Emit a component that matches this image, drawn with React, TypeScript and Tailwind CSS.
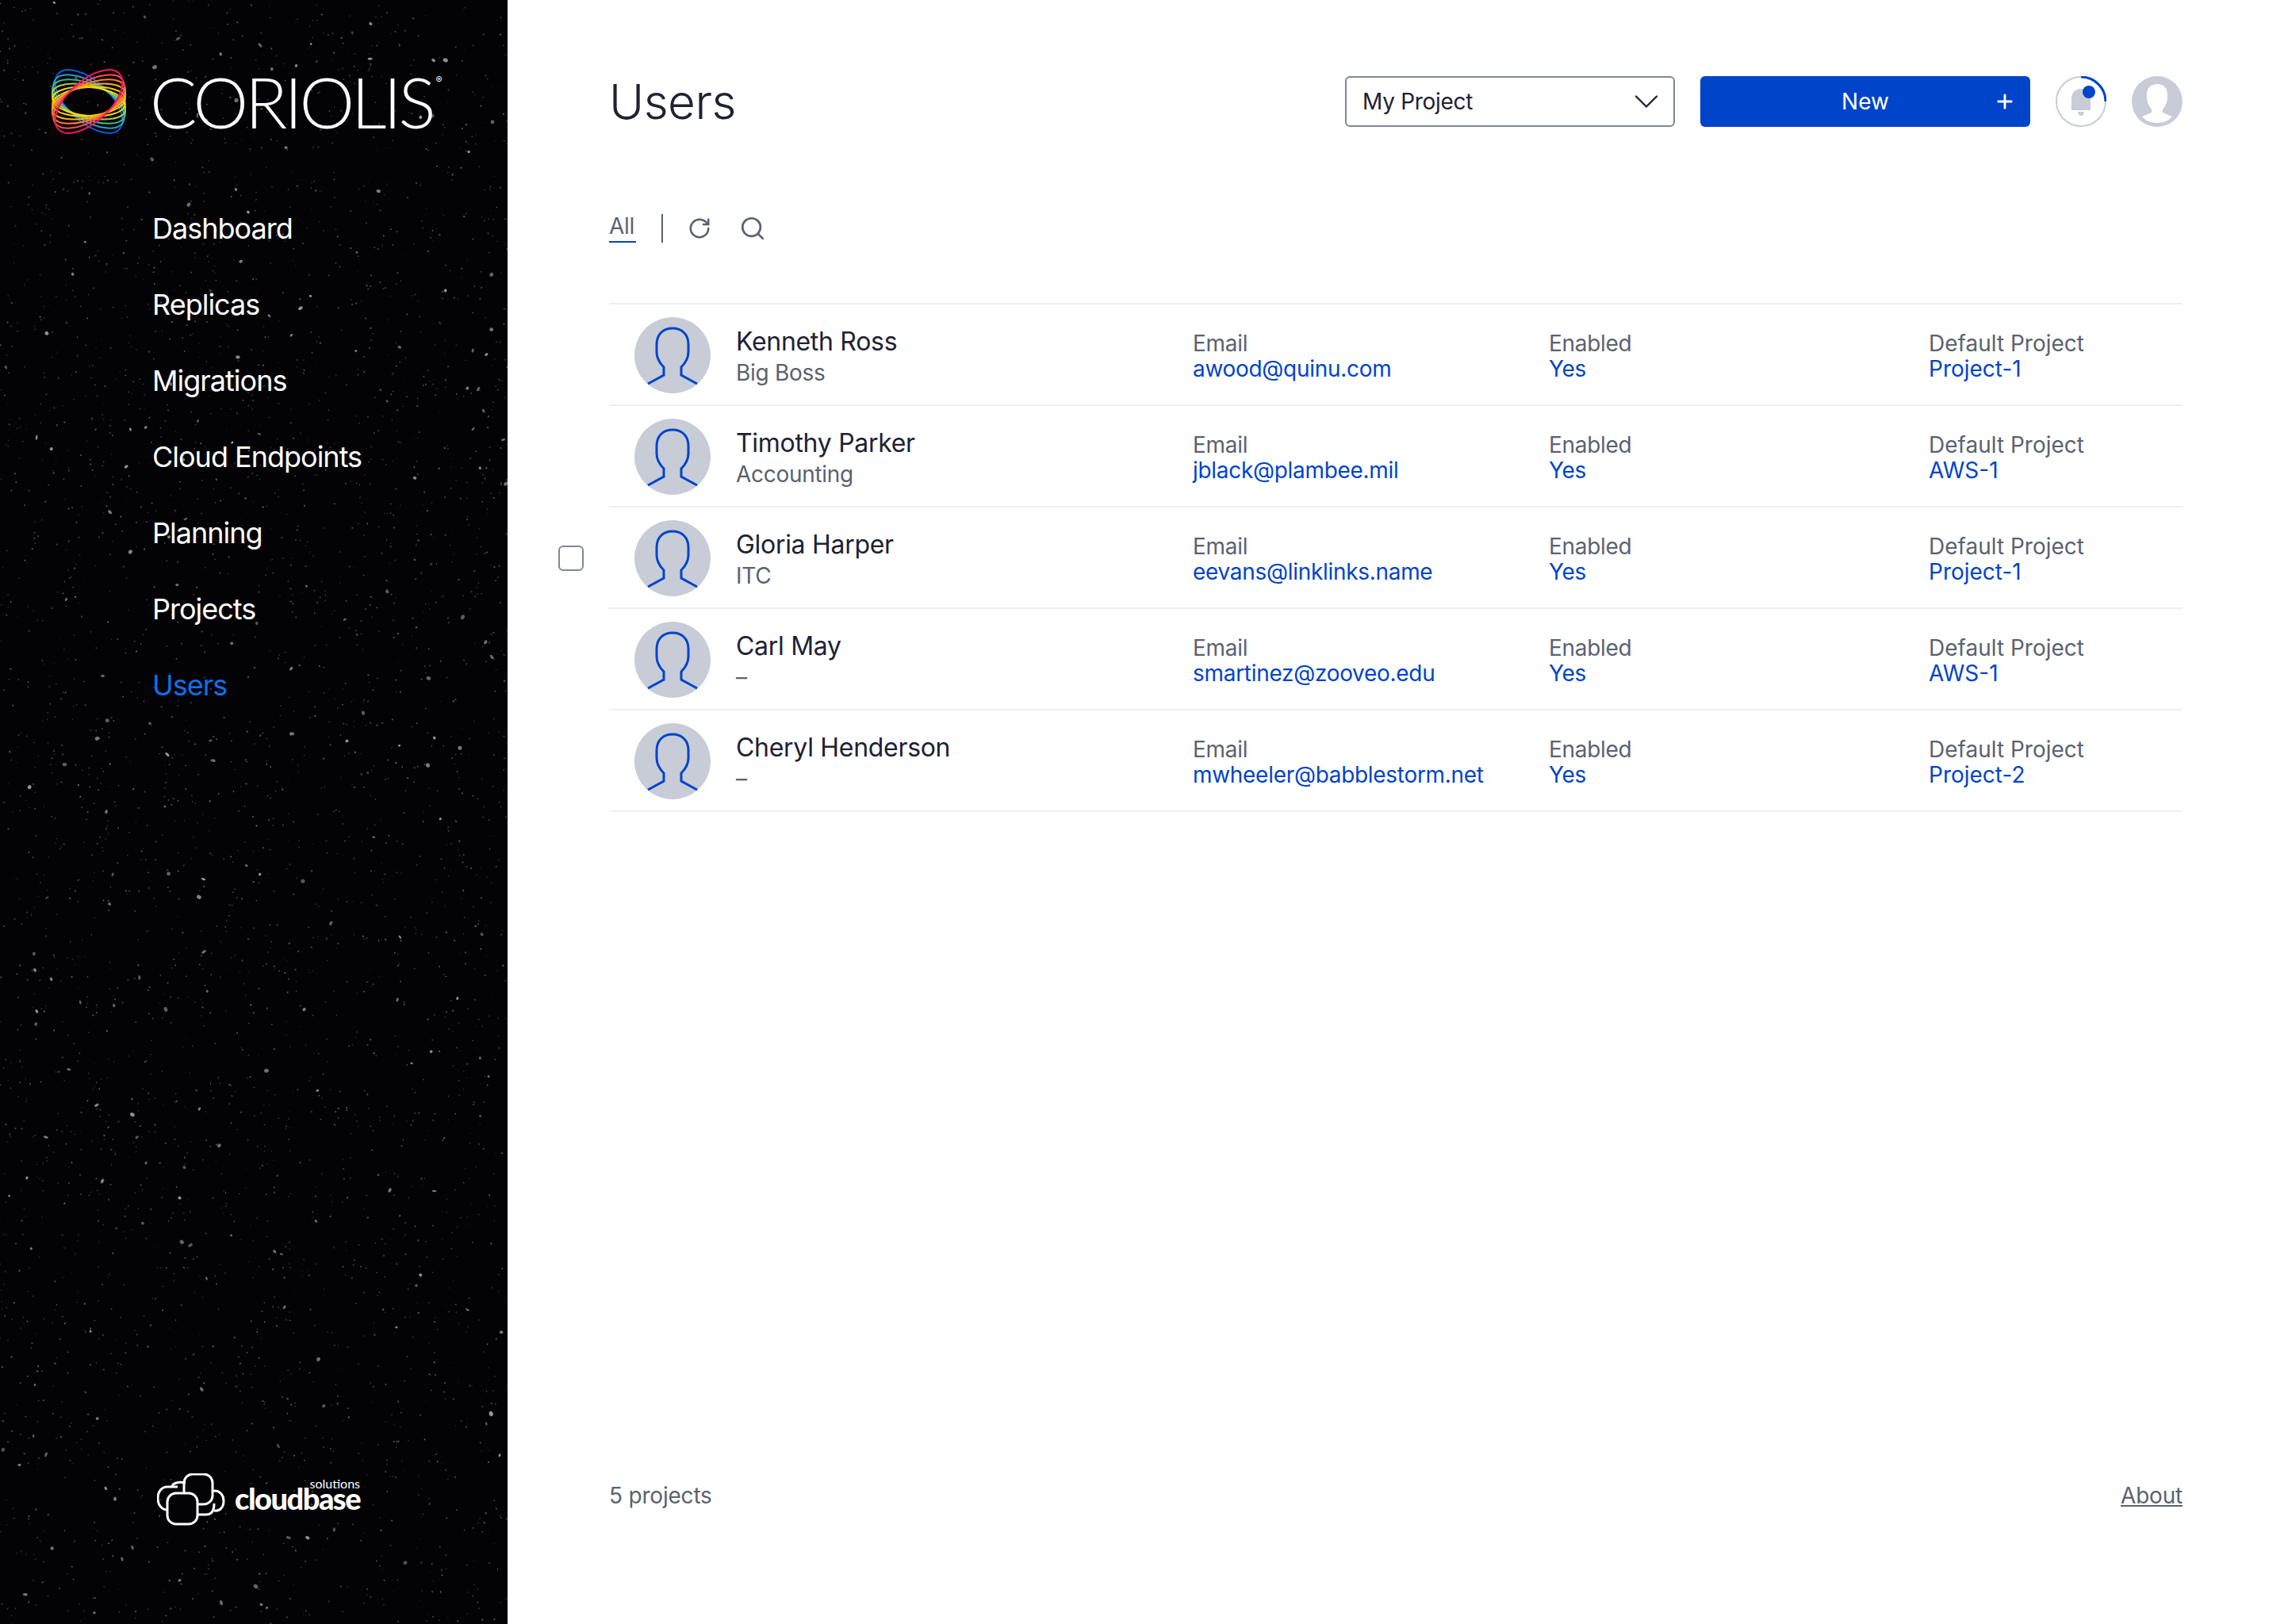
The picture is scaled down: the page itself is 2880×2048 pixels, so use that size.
import React from 'react';
import { Plus, ChevronDown, RotateCw, Search } from 'lucide-react';

// Star field: seeded so the picture is the same on every load
const makeStars = () => {
  let seed = 42;
  const rnd = () => {
    seed = (seed * 16807) % 2147483647;
    return seed / 2147483647;
  };
  return Array.from({ length: 3600 }, () => {
    const big = rnd() > 0.95;
    return {
      x: rnd() * 640,
      y: rnd() * 2048,
      rx: big ? 1.2 + rnd() * 1.4 : 0.6 + rnd() * 0.7,
      ry: big ? 1.2 + rnd() * 2 : 0.6 + rnd() * 0.7,
      a: rnd() * 180,
      o: big ? 0.3 + rnd() * 0.3 : 0.08 + rnd() * 0.28,
    };
  });
};
const stars = makeStars();

const logoRings = [
  { a: 42, rx: 52, ry: 26, c: '#0b5be0' },
  { a: 32, rx: 50.5, ry: 24, c: '#2a9fc4' },
  { a: 23, rx: 49, ry: 22, c: '#3fb395' },
  { a: 14, rx: 47.5, ry: 20, c: '#a9cb4d' },
  { a: 5, rx: 46, ry: 18, c: '#f7d916' },
  { a: -5, rx: 46, ry: 18, c: '#ffd000' },
  { a: -14, rx: 47.5, ry: 20, c: '#ffae1f' },
  { a: -23, rx: 49, ry: 22, c: '#ff8130' },
  { a: -32, rx: 50.5, ry: 24, c: '#fb4f4f' },
  { a: -42, rx: 52, ry: 26, c: '#f0165f' },
];

const navItems = ['Dashboard', 'Replicas', 'Migrations', 'Cloud Endpoints', 'Planning', 'Projects', 'Users'];

const users = [
  { name: 'Kenneth Ross', sub: 'Big Boss', email: 'awood@quinu.com', project: 'Project-1' },
  { name: 'Timothy Parker', sub: 'Accounting', email: 'jblack@plambee.mil', project: 'AWS-1' },
  { name: 'Gloria Harper', sub: 'ITC', email: 'eevans@linklinks.name', project: 'Project-1', checkbox: true },
  { name: 'Carl May', sub: '–', email: 'smartinez@zooveo.edu', project: 'AWS-1' },
  { name: 'Cheryl Henderson', sub: '–', email: 'mwheeler@babblestorm.net', project: 'Project-2' },
];

const Field = ({ label, value, className }: { label: string; value: string; className: string }) => (
  <div className={`${className} flex flex-col text-[28px] leading-[32px]`}>
    <span className="text-[#5a6270]">{label}</span>
    <span className="text-[#0044ca]">{value}</span>
  </div>
);

const UserRow = ({ user }: { user: (typeof users)[number] }) => (
  <div className="relative flex items-center h-[128px] pl-[32px] pt-[2px] border-b-2 border-[#eeeff3]">
    {user.checkbox && (
      <div className="absolute left-[-64px] top-[48px] w-[32px] h-[32px] rounded-[6px] border-2 border-[#7f8795] bg-white" />
    )}
    <svg className="w-[96px] h-[96px] shrink-0" viewBox="0 0 96 96" fill="none">
      <circle cx="48" cy="48" r="48" fill="#c8ccd7" />
      <path
        d="M17 84 L37 73 V63 C31 57 28 52 28 44 V34 C28 22 36 14 48 14 C60 14 68 22 68 34 V44 C68 52 65 57 59 63 V73 L79 84"
        stroke="#0044ca"
        strokeWidth="3"
      />
    </svg>
    <div className="w-[576px] ml-[32px] pt-[6px] flex flex-col">
      <span className="text-[32px] leading-[38px] tracking-[-0.3px] text-[#202134]">{user.name}</span>
      <span className="text-[28px] leading-[40px] tracking-[-0.3px] text-[#5a6270]">{user.sub}</span>
    </div>
    <Field className="w-[449px] tracking-[-0.3px] pt-[1px]" label="Email" value={user.email} />
    <Field className="w-[479px] tracking-[-0.3px] pt-[1px]" label="Enabled" value="Yes" />
    <Field className="w-[320px] tracking-[0px] pt-[1px]" label="Default Project" value={user.project} />
  </div>
);

const App: React.FC = () => {
  return (
    <div className="flex w-[2880px] h-[2048px] bg-white font-['Inter',sans-serif]">
      <aside className="relative w-[640px] h-full shrink-0 overflow-hidden bg-[#030305] flex flex-col">
        <svg className="absolute inset-0 w-[640px] h-[2048px] blur-[0.6px]" viewBox="0 0 640 2048">
          {stars.map((s, i) => (
            <ellipse
              key={i}
              cx={s.x}
              cy={s.y}
              rx={s.rx}
              ry={s.ry}
              fill="#fff"
              opacity={s.o}
              transform={`rotate(${s.a} ${s.x} ${s.y})`}
            />
          ))}
        </svg>
        <div className="relative flex items-center h-[84px] mt-[86px] ml-[65px]">
          <svg className="w-[94px] h-[84px]" viewBox="-47 -42 94 84" fill="none">
            {logoRings.map((r) => (
              <ellipse key={r.a} rx={r.rx} ry={r.ry} stroke={r.c} strokeWidth="2" transform={`rotate(${r.a})`} />
            ))}
          </svg>
          <span className="ml-[30px] text-[88px] leading-none font-['Lato',sans-serif] font-light text-white tracking-[-4px]">
            CORIOLIS
          </span>
          <span className="self-start mt-[6px] ml-[4px] text-[12px] text-white">®</span>
        </div>
        <nav className="relative flex flex-col gap-[48px] pl-[192px] mt-[94px]">
          {navItems.map((item) => (
            <span
              key={item}
              className={`text-[36px] leading-[48px] tracking-[-1px] ${item === 'Users' ? 'text-[#0f6fea]' : 'text-white'}`}
            >
              {item}
            </span>
          ))}
        </nav>
        <div className="relative mt-auto mb-[124px] ml-[198px] flex items-center">
          <svg className="w-[86px] h-[66px]" viewBox="0 0 86 66" fill="none" stroke="#fff" strokeWidth="3">
            <path d="M62 22 H72 C80 22 84 28 84 35 C84 43 79 48 72 47" />
            <path d="M35 38 V52 H62 C70 52 72 46 72 38" />
            <rect x="34" y="1" width="36" height="38" rx="11" fill="#030305" />
            <path d="M36 12 C26 10 19 13 19 17" />
            <path d="M26 17 H13 C6 17 1 23 1 31 C1 40 6 46 13 46 H14" />
            <rect x="13" y="25" width="38" height="39" rx="11" fill="#030305" />
          </svg>
          <div className="relative ml-[12px] h-[40px] w-[160px]">
            <span className="absolute left-0 bottom-[3px] text-[38px] leading-none font-['Lato',sans-serif] font-black tracking-[-1.5px] text-white">
              cloudbase
            </span>
            <span className="absolute right-[2px] top-[-8px] text-[16px] leading-none font-['Lato',sans-serif] text-white">
              solutions
            </span>
          </div>
        </div>
      </aside>

      <main className="flex-1 h-full flex flex-col pl-[128px] pr-[128px]">
        <header className="flex items-center h-[64px] mt-[96px]">
          <h1 className="text-[60px] leading-none font-light tracking-[-0.5px] text-[#202134]">Users</h1>
          <div className="ml-auto flex items-center w-[416px] h-[64px] rounded-[6px] border-2 border-[#7f8795] px-[20px]">
            <span className="text-[28px] tracking-[-0.3px] text-[#202134]">My Project</span>
            <ChevronDown className="ml-auto -mr-[12px] w-[52px] h-[52px] text-[#202134]" strokeWidth={1.1} />
          </div>
          <button className="relative ml-[32px] w-[416px] h-[64px] rounded-[6px] bg-[#0044ca] text-white text-[28px] flex items-center justify-center">
            New
            <Plus className="absolute right-[18px] w-[28px] h-[28px]" strokeWidth={2.5} />
          </button>
          <svg className="ml-[32px] w-[64px] h-[64px]" viewBox="0 0 64 64" fill="none">
            <circle cx="32" cy="32" r="31" stroke="#c8ccd7" strokeWidth="2" />
            <path d="M32 1 A31 31 0 0 1 63 32" stroke="#0044ca" strokeWidth="3" />
            <path d="M20 43 V28 C20 21 25 16 32 16 C39 16 44 21 44 28 V43 Z" fill="#c8ccd7" />
            <path d="M28 45 H36 C36 48 34 50 32 50 C30 50 28 48 28 45 Z" fill="#c8ccd7" />
            <circle cx="42" cy="20" r="8" fill="#0044ca" />
          </svg>
          <svg className="ml-[32px] w-[64px] h-[64px]" viewBox="0 0 64 64">
            <circle cx="32" cy="32" r="32" fill="#c8ccd7" />
            <path
              d="M13 51 L25 46 V42 C21 37 19 32 19 27 V23 C19 15 24 10 32 10 C40 10 45 15 45 23 V27 C45 32 43 37 39 42 V46 L51 51 C46 57 39 59 32 59 C25 59 18 57 13 51 Z"
              fill="#fff"
            />
          </svg>
        </header>

        <div className="flex items-center mt-[110px] h-[36px] text-[#5a6270]">
          <span className="text-[28px] leading-[30px] tracking-[-0.3px] border-b-2 border-[#0044ca] h-[36px] w-[34px]">
            All
          </span>
          <div className="w-[2px] h-[36px] bg-[#5a6270] ml-[32px]" />
          <RotateCw className="ml-[31px] w-[30px] h-[30px]" strokeWidth={2} />
          <Search className="ml-[35px] w-[34px] h-[34px]" strokeWidth={1.9} />
        </div>

        <div className="mt-[76px] border-t-2 border-[#eeeff3]">
          {users.map((u) => (
            <UserRow key={u.name} user={u} />
          ))}
        </div>

        <footer className="mt-auto mb-[144px] flex items-center justify-between text-[28px] leading-[36px] tracking-[-0.2px] text-[#5a6270]">
          <span>5 projects</span>
          <span className="underline">About</span>
        </footer>
      </main>
    </div>
  );
};

export default App;
